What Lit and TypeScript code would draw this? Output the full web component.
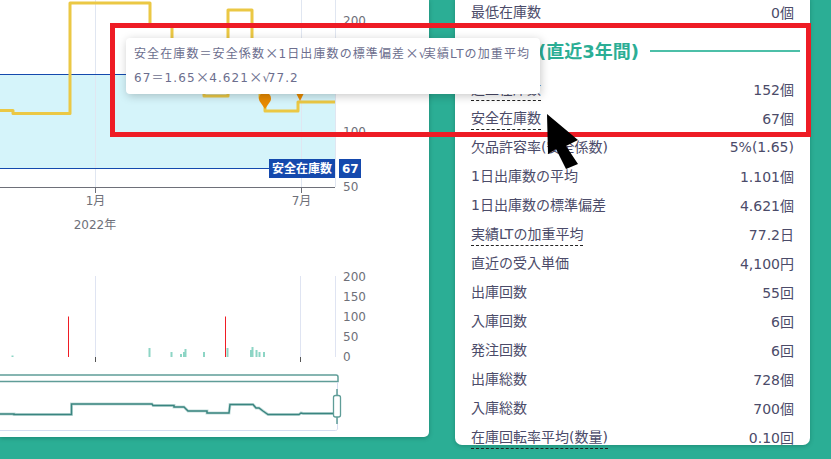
import { LitElement, html, css, svg } from "lit";
import { customElement } from "lit/decorators.js";

type Row = [string, string, boolean?];
const topRows: Row[] = [["最低在庫数", "0個"]];
const rows: Row[] = [
  ["適正在庫数", "152個", true],
  ["安全在庫数", "67個", true],
  ["欠品許容率(安全係数)", "5%(1.65)"],
  ["1日出庫数の平均", "1.101個"],
  ["1日出庫数の標準偏差", "4.621個"],
  ["実績LTの加重平均", "77.2日", true],
  ["直近の受入単価", "4,100円"],
  ["出庫回数", "55回"],
  ["入庫回数", "6回"],
  ["発注回数", "6回"],
  ["出庫総数", "728個"],
  ["入庫総数", "700個"],
  ["在庫回転率平均(数量)", "0.10回", true],
];
const greenBars: [number, number][] = [
  [12.5, 355.5], [149.5, 348], [171.5, 352], [181, 354], [184, 352], [185.5, 349],
  [204, 352], [227.5, 348], [251, 350], [252.5, 347], [256.5, 350], [259.5, 352], [264, 352],
];
const axisTop: [string, number][] = [["200", 20], ["100", 131], ["50", 186]];
const axisBottom: [string, number][] = [["200", 276], ["150", 296], ["100", 316], ["50", 336], ["0", 356]];

@customElement("app-root")
export class AppRoot extends LitElement {
  static styles = css`
    :host {
      display: block;
      position: relative;
      width: 831px;
      height: 459px;
      overflow: hidden;
      background: #2bae95;
      font-family: "DejaVu Sans", "Noto Sans CJK JP", sans-serif;
      color: #4b4b69;
    }
    .page { display: flex; align-items: flex-start; gap: 26px; }
    .chart-card {
      width: 429px;
      height: 437px;
      flex: none;
      background: #fff;
      border-bottom-right-radius: 5px;
      box-shadow: 0 1px 4px rgba(0, 60, 50, 0.35);
    }
    .chart-card svg { display: block; }
    .axis { font-size: 12px; fill: #6e7079; }
    .tag { font-size: 12px; font-weight: 700; fill: #fff; }
    .stats {
      width: 323px;
      height: 447.5px;
      flex: none;
      margin-top: -2.5px;
      padding: 0 16px;
      background: #fff;
      border-bottom-left-radius: 7px;
      border-bottom-right-radius: 7px;
      box-shadow: 0 1px 4px rgba(0, 60, 50, 0.3);
      font-size: 14px;
    }
    .row { display: flex; justify-content: space-between; align-items: center; height: 29px; white-space: nowrap; }
    .label { display: block; line-height: 22px; }
    .label.tip { border-bottom: 1px dashed #222; margin-top: 1px; }
    .heading { display: flex; align-items: center; height: 47.9px; gap: 11px; padding-left: 67px; color: #2bae95; font-size: 18px; font-weight: 700; white-space: nowrap; }
    .heading i { flex: 1; height: 2px; background: #4cbfa8; margin-top: 1px; margin-right: -6px; }
    .frame {
      position: absolute;
      left: 110px;
      top: 23px;
      width: 701px;
      height: 114px;
      box-sizing: border-box;
      border: 5px solid #ee1c25;
    }
    .tooltip {
      position: absolute;
      left: 126px;
      top: 38px;
      width: 414px;
      height: 56px;
      box-sizing: border-box;
      padding: 4px 8px;
      background: #fff;
      border-radius: 4px;
      box-shadow: 1px 2px 10px rgba(0, 0, 0, 0.22);
      font-size: 12px;
      line-height: 24px;
      letter-spacing: 1.1px;
      color: #6c6e8e;
      white-space: nowrap;
    }
    .cjk { font-family: "Noto Sans CJK JP", sans-serif; font-size: 13.5px; line-height: 0; letter-spacing: 0; }
    .root { letter-spacing: -2.5px; }
    .root + * { margin-left: 2.5px; }
    .cursor { position: absolute; left: 540px; top: 108px; }
  `;

  private chart() {
    return html`<svg width="429" height="437" viewBox="0 0 429 437">
      <rect x="0" y="74" width="335" height="94" fill="#d5f4fa"></rect>
      <path d="M95.5 0V187M301.5 0V187M335.5 0V187" stroke="#e0e6f1" fill="none"></path>
      <path d="M0 74.5H335M0 168.5H270" stroke="#1449ad" fill="none"></path>
      <path d="M0 110.5H13V113.5H70V3H150V25H172V70H204V96H228V10H252V60H260V98H265V111H298V102H335"
        stroke="#ebc844" stroke-width="3" fill="none" stroke-linejoin="round"></path>
      <path d="M259.5 101a6 6 0 1 1 11 0l-5.500 8z" fill="#e88a00"></path>
      <path d="M294.500 90a6 6 0 1 1 11 0l-5.500 11z" fill="#e88a00"></path>
      <path d="M0 187.500H335M95.500 187.500V193M301.500 187.500V193" stroke="#6e7079" fill="none"></path>
      ${axisTop.map(([t, y]) => svg`<text class="axis" x="343" y=${y + 4.5}>${t}</text>`)}
      <text class="axis" x="95.500" y="205" text-anchor="middle">1月</text>
      <text class="axis" x="301.500" y="205" text-anchor="middle">7月</text>
      <text class="axis" x="95" y="229" text-anchor="middle">2022年</text>
      <rect x="269" y="159" width="66" height="19" fill="#1449ad"></rect>
      <text class="tag" x="272" y="172.500">安全在庫数</text>
      <rect x="339" y="159" width="22" height="19" fill="#1449ad"></rect>
      <text class="tag" x="342" y="172.500">67</text>

      <path d="M95.500 276V357M300.500 276V357M335.500 276V357" stroke="#dfe4f2" fill="none"></path>
      <path d="M95.500 357V362M300.500 357V362" stroke="#555" fill="none"></path>
      ${greenBars.map(([x, y]) => svg`<rect x=${x - 1} y=${y} width="2" height=${357 - y} fill="#8dd5c5"></rect>`)}
      <path d="M68.500 316.500V357M225.500 316.500V357" stroke="#f01c24" fill="none"></path>
      ${axisBottom.map(([t, y]) => svg`<text class="axis" x="343" y=${y + 4.500}>${t}</text>`)}

      <path d="M0 375H336a2 2 0 0 1 2 2V381.500H0" fill="#fff" stroke="#5f9d98" stroke-width="1.500"></path>
      <path d="M337.500 382V428a2 2 0 0 1-2 2.500H0" fill="none" stroke="#d5ddf0"></path>
      <path d="M0 414H14V414.500H71.500V404H152L153 405.500H174V407H184L188 411H207V413H229L230 404.500H253L256 408H259L263 411L268 414.500H299L301 413L303 413.500H334"
        fill="none" stroke="#c5dedb" stroke-width="3"></path>
      <path d="M0 414H14V414.500H71.500V404H152L153 405.500H174V407H184L188 411H207V413H229L230 404.500H253L256 408H259L263 411L268 414.500H299L301 413L303 413.500H334"
        fill="none" stroke="#3a8580" stroke-width="1.500"></path>
      <path d="M337 389V395M337 417V424" stroke="#5f9d98" stroke-width="1.500"></path>
      <rect x="333.500" y="395.500" width="7" height="21.500" rx="2" fill="#fff" stroke="#5f9d98" stroke-width="1.300"></rect>
    </svg>`;
  }

  private row(r: Row) {
    return html`<div class="row">
      <span class="label ${r[2] ? "tip" : ""}">${r[0]}</span><span>${r[1]}</span>
    </div>`;
  }

  render() {
    return html`
      <div class="page">
        <section class="chart-card">${this.chart()}</section>
        <section class="stats">
          ${topRows.map((r) => this.row(r))}
          <div class="heading"><span>(直近3年間)</span><i></i></div>
          ${rows.map((r) => this.row(r))}
        </section>
      </div>
      <div class="frame"></div>
      <div class="tooltip">
        <div>安全在庫数＝安全係数<span class="cjk">×</span>1日出庫数の標準偏差<span class="cjk">×</span><span class="root">√</span>実績LTの加重平均</div>
        <div>67＝1.65<span class="cjk">×</span>4.621<span class="cjk">×</span><span class="root">√</span>77.2</div>
      </div>
      <svg class="cursor" width="44" height="66" viewBox="540 108 44 66">
        <path d="M547 114L578 140L566 146L578 164L566 169L556 149L548 154Z" fill="#000"></path>
      </svg>
    `;
  }
}
